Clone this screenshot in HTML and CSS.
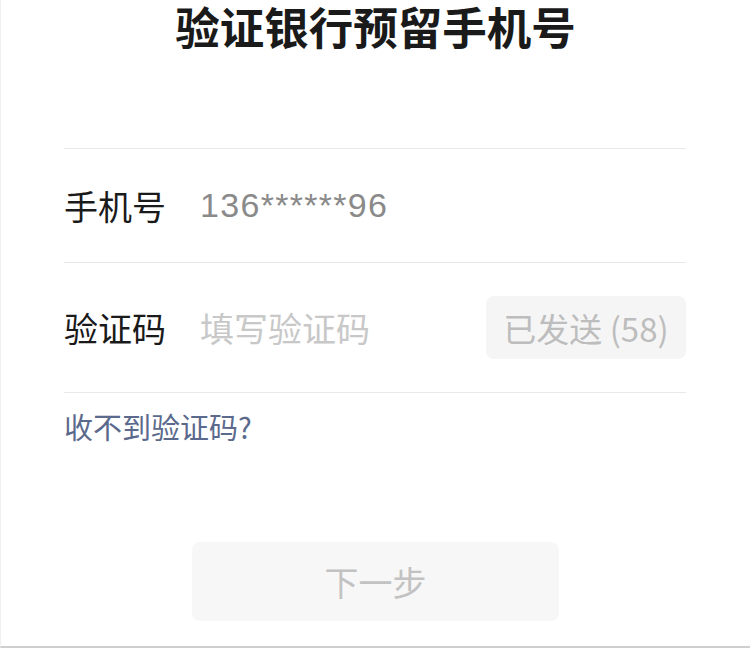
FILE: index.html
```
<!DOCTYPE html>
<html lang="zh-CN">
<head>
<meta charset="utf-8">
<link rel="stylesheet" href="styles.css">
</head>
<body>
<div class="page">
  <h1 class="title">验证银行预留手机号</h1>
  <div class="form">
    <div class="row row-phone">
      <span class="label">手机号</span>
      <span class="value">136******96</span>
    </div>
    <div class="row row-code">
      <span class="label">验证码</span>
      <span class="placeholder">填写验证码</span>
      <span class="send">已发送 (58)</span>
    </div>
    <div class="link">收不到验证码?</div>
  </div>
  <div class="next">下一步</div>
</div>
</body>
</html>
```
FILE: styles.css
```
html, body {
  margin: 0;
  padding: 0;
  background: #fff;
}
body {
  font-family: "Noto Sans CJK SC", "Noto Sans", sans-serif;
}
.page {
  width: 750px;
  height: 648px;
  box-sizing: border-box;
  border-left: 1px solid #f0f0f0;
  border-bottom: 2px solid #cfcfcf;
  overflow: hidden;
}
.title {
  margin: 0;
  font-size: 44.5px;
  line-height: 52px;
  font-weight: 700;
  color: #1a1a1a;
  text-align: center;
}
.form {
  margin: 96px 0 0 63px;
  width: 622px;
}
.row {
  display: flex;
  align-items: center;
  border-top: 1px solid #e8e8e8;
}
.row-phone {
  height: 113px;
}
.row-code {
  height: 129px;
  border-bottom: 1px solid #e8e8e8;
}
.label {
  font-size: 34px;
  color: #1a1a1a;
  width: 136px;
  flex: none;
}
.value {
  font-family: "Liberation Sans", "Noto Sans CJK SC", sans-serif;
  font-size: 34px;
  letter-spacing: 1.3px;
  color: #8a8a8a;
}
.placeholder {
  font-size: 34px;
  color: #c8c8c8;
  flex: 1;
}
.send {
  width: 200px;
  height: 63px;
  background: #f5f5f5;
  border-radius: 8px;
  display: flex;
  align-items: center;
  justify-content: center;
  font-size: 33px;
  color: #bdbdbd;
}
.link {
  margin-top: 13px;
  font-size: 29px;
  line-height: 40px;
  color: #5b6a8c;
}
.next {
  margin: 96px auto 0;
  width: 367px;
  height: 79px;
  background: #f7f7f7;
  border-radius: 8px;
  display: flex;
  align-items: center;
  justify-content: center;
  font-size: 34px;
  color: #c2c2c2;
}
```
